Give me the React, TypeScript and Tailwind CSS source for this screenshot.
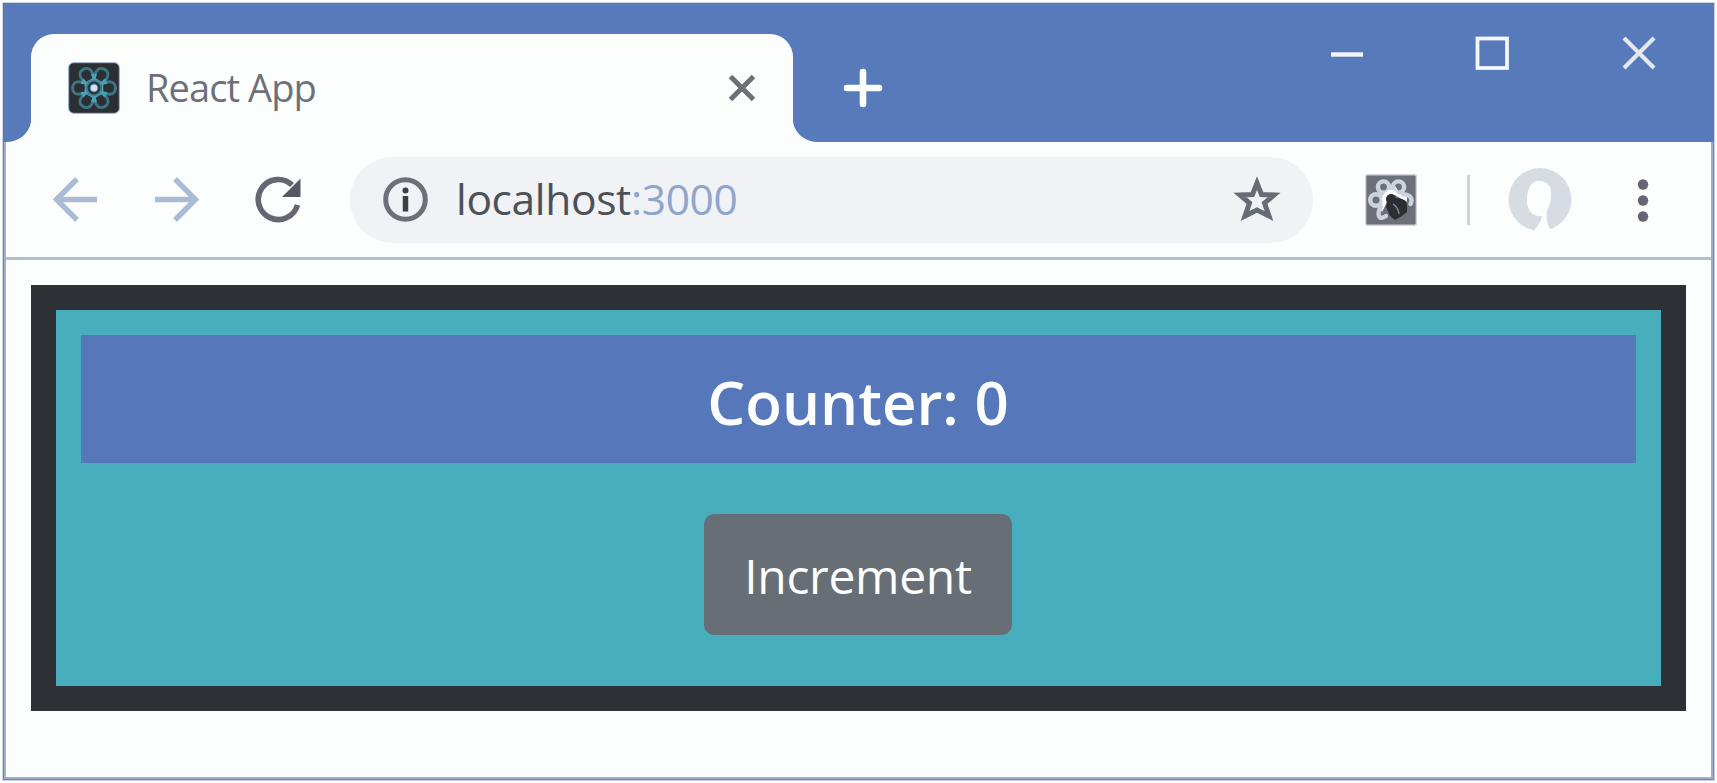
import { useState } from "react";

const PETALS = [0, 60, 120, 180, 240, 300];

function TabFoot({ flip = false }: { flip?: boolean }) {
  return (
    <svg width="28" height="25" viewBox="0 0 28 25" className={flip ? "shrink-0 -scale-x-100" : "shrink-0"}>
      <path d="M28.5 0 C28.5 14 18 25 3 25 H28.5 Z" fill="#fcfefe" />
    </svg>
  );
}

function ReactIcon() {
  return (
    <svg width="52" height="52" viewBox="0 0 52 52" fill="none" className="shrink-0">
      <rect x="0.7" y="0.7" width="50.6" height="50.6" rx="5" fill="#2b2f34" stroke="#9cafcf" strokeWidth="1" />
      {PETALS.map((a) => (
        <path
          key={a}
          transform={`rotate(${a} 26 26)`}
          d="M34 21.5 C37 20 39 19.800 41.500 19.800 C45.500 19.800 47.500 23 47.500 26 C47.500 29 45.500 32.200 41.500 32.200 C39 32.200 37 32 34 30.500"
          stroke="#3e7585"
          strokeWidth="3"
        />
      ))}
      {PETALS.map((a) => (
        <path key={a} transform={`rotate(${a} 26 26)`} d="M39 20.500 L34 21.500 L34 30.500 L39 31.500" stroke="#4aa3b8" strokeWidth="2.6" />
      ))}
      <circle cx="26" cy="26" r="7.400" fill="#2b2f34" stroke="#3f8496" strokeWidth="2" />
      <circle cx="26" cy="26" r="4.400" fill="#5592bb" />
      <circle cx="26" cy="26" r="3.2" fill="#dbe2ea" />
    </svg>
  );
}

function DevtoolsIcon() {
  return (
    <svg width="52" height="52" viewBox="0 0 52 52" fill="none" className="shrink-0">
      <rect x="0.7" y="0.7" width="50.6" height="50.6" rx="2" fill="#6d7078" stroke="#cdd3dc" strokeWidth="1.4" />
      <path d="M20 19 L23 12 H30 L34 18 L42 22 V28 L35 24 L28 20 L22 23 L21 30 L17 38 L14 32 L16 22 Z" fill="#fcfefe" />
      <g stroke="#cdd3dc" strokeWidth="4.4" strokeLinecap="round" strokeLinejoin="round">
        <circle cx="18.500" cy="13" r="5.6" />
        <circle cx="33.500" cy="13" r="5.600" />
        <circle cx="11" cy="26" r="5.800" />
        <path d="M38 20.500 C43 20 47 23 46.500 27 C46.500 28 46 29 45.500 30" />
        <path d="M17 31 C13 36 13 39 14 42 C15 45 18 44 21 42" />
      </g>
      <path d="M17 24 L20 19 L24 16 H29 L34 21 L28 21 L22 23 L21 29 L18 35 Z" fill="#fcfefe" />
      <ellipse cx="26" cy="25" rx="5" ry="5" fill="#2b2f34" />
      <path d="M22 29 L30 24 C37 24 42 26 42 31 V38 L37 42 L30 46 L25 42 L21 33 Z" fill="#2b2f34" />
      <path d="M28 30 Q33 33 34 40" stroke="#8b8f97" strokeWidth="1.3" />
    </svg>
  );
}

export default function App() {
  const [count, setCount] = useState(0);

  return (
    <div className="h-[783px] w-[1717px] overflow-hidden bg-[#fcfefe] p-[2px] font-['Open_Sans','Noto_Sans',sans-serif]">
      <div className="flex h-[779px] w-[1713px] flex-col border border-[#cdd3dc]">
        <header className="flex h-[139px] shrink-0 items-start bg-[#577bba]">
          <div className="flex h-[139px] items-end pt-[30px]">
            <TabFoot />
            <div className="flex h-[108px] w-[762px] items-center rounded-t-[23px] bg-[#fcfefe] pl-[37px] pr-[37px]">
              <ReactIcon />
              <h1 className="ml-[26px] whitespace-nowrap pb-[2px] text-[38px] leading-none tracking-[-0.9px] text-[#6d7078]">React App</h1>
              <svg width="28" height="28" viewBox="0 0 28 28" className="ml-auto" stroke="#6d7078" strokeWidth="5">
                <path d="M2.5 2.5 L25.5 25.5 M25.5 2.5 L2.5 25.5" />
              </svg>
            </div>
            <TabFoot flip />
          </div>
          <svg width="40" height="40" viewBox="0 0 40 40" className="ml-[22px] mt-[65px]" stroke="#fcfefe" strokeWidth="6.6" strokeLinecap="round">
            <path d="M20 4 V36 M4 20 H36" />
          </svg>
          <div className="ml-auto mr-[57px] mt-[31px] flex items-center gap-[110px]">
            <svg width="36" height="36" viewBox="0 0 36 36" stroke="#f3f5f8" strokeWidth="4.4">
              <path d="M2 20.5 H34" />
            </svg>
            <svg width="36" height="36" viewBox="0 0 36 36" fill="none" stroke="#f3f5f8" strokeWidth="3.8">
              <rect x="2.5" y="4.5" width="29.5" height="29.5" />
            </svg>
            <svg width="36" height="36" viewBox="0 0 36 36" stroke="#e4e8ee" strokeWidth="4.2">
              <path d="M3 4 L33 34 M33 4 L3 34" />
            </svg>
          </div>
        </header>

        <div className="flex min-h-0 flex-1 flex-col border-x border-b border-[#5592bb]">
          <div className="flex min-h-0 flex-1 flex-col border-x-2 border-b-2 border-[#9cafcf]">
            <nav className="flex h-[118px] shrink-0 items-center border-b-[3px] border-[#b3bfd3] pl-[46px]">
              <svg width="48" height="48" viewBox="0 0 48 48" fill="none" stroke="#acbbd4" strokeWidth="5.4" className="shrink-0">
                <path d="M45 23.5 H5 M25 3 L4.5 23.5 L25 44" />
              </svg>
              <svg width="48" height="48" viewBox="0 0 48 48" fill="none" stroke="#acbbd4" strokeWidth="5.4" className="ml-[54px] shrink-0">
                <path d="M1 23.5 H41 M21 3 L41.500 23.5 L21 44" />
              </svg>
              <svg width="48" height="48" viewBox="0 0 48 48" fill="none" className="ml-[52px] shrink-0">
                <path d="M43.500 29 A20 20 0 1 1 38 9" stroke="#63676f" strokeWidth="5.6" />
                <path d="M46.500 2.500 V21 H28 Z" fill="#555a62" />
              </svg>
              <div className="ml-[48px] flex h-[86px] w-[963px] shrink-0 items-center rounded-full bg-[#f0f2f5] pl-[33px] pr-[32px]">
                <svg width="46" height="46" viewBox="0 0 46 46" fill="none" className="shrink-0">
                  <circle cx="22.500" cy="22.500" r="19.8" stroke="#6d7078" strokeWidth="5" />
                  <circle cx="22.500" cy="13.500" r="3" fill="#3b4047" />
                  <path d="M22.500 19 V34.500" stroke="#3b4047" strokeWidth="5.5" />
                </svg>
                <p className="ml-[27px] whitespace-nowrap text-[42.5px] leading-none tracking-[-0.35px] text-[#4c5158]">
                  localhost<span className="text-[#8fa5ca]">:3000</span>
                </p>
                <svg width="48" height="48" viewBox="0 0 48 48" fill="none" className="ml-auto shrink-0">
                  <path d="M24 7 L28.500 18.500 L41 19 L31.500 27 L36 40 L24 34 L12 40 L16.500 27 L7 19 L19.500 18.500 Z" stroke="#676b73" strokeWidth="5" />
                </svg>
              </div>
              <div className="ml-[52px] flex shrink-0 items-center">
                <DevtoolsIcon />
                <div className="ml-[50px] h-[50px] w-[3px] bg-[#cdd3dc]" />
                <svg width="66" height="66" viewBox="0 0 66 66" className="ml-[37px]">
                  <circle cx="33" cy="32.5" r="31.500" fill="#d7dce3" />
                  <path d="M32 14 C22 14 20 26 20 34 C20 42 24 50 35 49 C34 55 31 59 28 62 L27 66 H42 L43 62 C40 57 39 50 40 44 C44 36 44 30 44 25 C44 18 39 14 32 14 Z" fill="#fcfefe" />
                </svg>
                <svg width="14" height="46" viewBox="0 0 14 46" fill="#63676f" className="ml-[63px]">
                  <circle cx="7" cy="7.500" r="5.200" />
                  <circle cx="7" cy="23.500" r="5.200" />
                  <circle cx="7" cy="39.500" r="5.200" />
                </svg>
              </div>
            </nav>

            <main className="mt-[25px] ml-[25px] h-[426px] w-[1655px] shrink-0 border-[25px] border-[#2d3035] bg-[#48adbd] p-[25px]">
              <h2 className="flex h-[128px] items-center justify-center whitespace-nowrap bg-[#5677b9] pt-[5px] pr-[1px] text-[60px] font-semibold leading-none text-[#fcfefe]">
                Counter: {count}
              </h2>
              <div className="mt-[51px] flex justify-center pr-[1px]">
                <button
                  type="button"
                  onClick={() => setCount(count + 1)}
                  className="flex h-[121px] w-[308px] items-center justify-center rounded-[10px] bg-[#686e76] pt-[2px] text-[48px] leading-none tracking-[-0.3px] text-[#fcfefe]"
                >
                  Increment
                </button>
              </div>
            </main>
          </div>
        </div>
      </div>
    </div>
  );
}
